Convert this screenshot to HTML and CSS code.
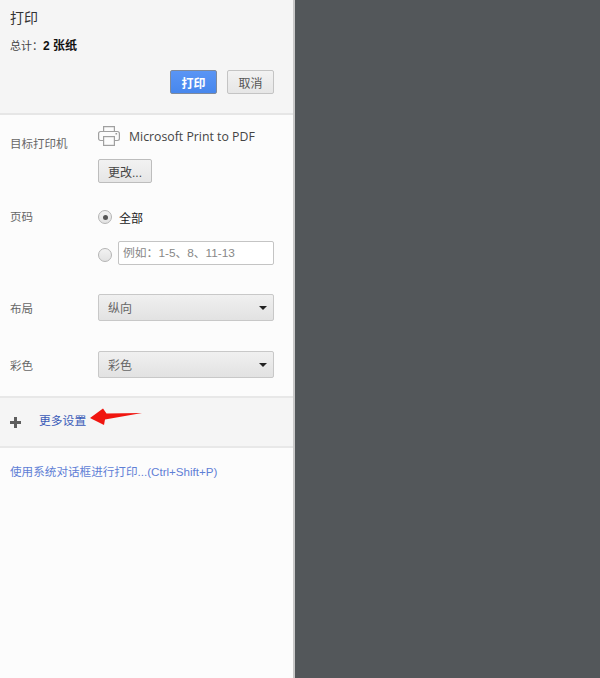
FILE: index.html
```html
<!DOCTYPE html>
<html lang="zh">
<head>
<meta charset="utf-8">
<title>打印</title>
<link rel="stylesheet" href="styles.css">
</head>
<body>
<div class="app">
  <aside class="sidebar">
    <header class="head">
      <h1 class="title">打印</h1>
      <p class="total">总计：<b>2 张纸</b></p>
      <div class="actions">
        <button class="btn primary">打印</button>
        <button class="btn cancel">取消</button>
      </div>
    </header>
    <section class="settings">
      <div class="row row-dest">
        <div class="label">目标打印机</div>
        <div class="content">
          <div class="dest">
            <svg class="printer" width="22" height="20" viewBox="0 0 22 20" fill="none" stroke="#a0a0a0" stroke-width="1.2">
              <path d="M5.6 5.500V.6h10.800v4.900"/>
              <path d="M5.500 14.500H2.500a1.900 1.900 0 0 1-1.900-1.900V7.400a1.900 1.900 0 0 1 1.900-1.900h17a1.900 1.900 0 0 1 1.900 1.900v5.200a1.900 1.900 0 0 1-1.900 1.900h-3"/>
              <rect x="5.6" y="10.6" width="10.8" height="8.8"/>
              <path d="M17.500 7.800h1.600" stroke="#808080"/>
            </svg>
            <span class="dest-name">Microsoft Print to PDF</span>
          </div>
          <button class="btn change">更改...</button>
        </div>
      </div>
      <div class="row row-pages">
        <div class="label">页码</div>
        <div class="content">
          <div class="radio-line first">
            <span class="radio checked"></span><span class="radio-text">全部</span>
          </div>
          <div class="radio-line second">
            <span class="radio low"></span><span class="text-input">例如：1-5、8、11-13</span>
          </div>
        </div>
      </div>
      <div class="row row-layout">
        <div class="label">布局</div>
        <div class="content"><div class="select"><span>纵向</span><i class="caret"></i></div></div>
      </div>
      <div class="row row-color">
        <div class="label">彩色</div>
        <div class="content"><div class="select"><span>彩色</span><i class="caret"></i></div></div>
      </div>
    </section>
    <div class="more">
      <svg class="plus" width="11" height="11" viewBox="0 0 11 11"><path d="M4 0h3v4h4v3H7v4H4V7H0V4h4z" fill="#5e5e5e"/></svg>
      <a class="more-link">更多设置</a>
      <svg class="arrow" width="53" height="18" viewBox="0 0 53 18"><path d="M0 10 13 .5 16.500 5.500l35.500-.5L15 11.500 14 17z" fill="#f0150f"/></svg>
    </div>
    <a class="system">使用系统对话框进行打印...(Ctrl+Shift+P)</a>
  </aside>
  <main class="preview"></main>
</div>
</body>
</html>
```

FILE: styles.css
```css
* { box-sizing: border-box; }
html, body { margin: 0; height: 100%; }
body { font-family: "Liberation Sans", "Noto Sans CJK SC", sans-serif; font-size: 12px; color: #444; }
.app { display: flex; height: 678px; overflow: hidden; }
.sidebar { width: 295px; flex: none; background: #fcfcfc; border-right: 2px solid #c8c8c8; }
.preview { flex: 1; background: #53575a; }

.head { height: 115px; background: #f5f5f5; border-bottom: 2px solid #e6e6e6; padding: 9px 19px 0 10px; }
.title { margin: 0; font-size: 14px; line-height: 19px; font-weight: 400; color: #333; }
.total { margin: 9px 0 0; font-size: 11px; line-height: 18px; color: #444; }
.total b { color: #111; font-size: 12px; font-weight: 700; }
.actions { display: flex; justify-content: flex-end; gap: 10px; margin-top: 15px; }

.btn { font: inherit; padding: 0; border-radius: 2px; cursor: default; }
.primary { width: 47px; height: 24px; background: linear-gradient(#5a95f5, #4787ed); border: 1px solid #7f8a9c; color: #fff; font-weight: 700; }
.cancel { width: 47px; height: 24px; background: linear-gradient(#f2f2f2, #e6e6e6); border: 1px solid #c4c4c4; color: #555; }
.change { display: block; width: 54px; height: 24px; background: linear-gradient(#f2f2f2, #e6e6e6); border: 1px solid #bdbdbd; color: #444; }

.row { display: grid; grid-template-columns: 88px 175.5px; padding-left: 10px; }
.label { color: #666; font-size: 11.5px; line-height: 18px; }
.row-dest { padding-top: 11px; height: 80px; }
.row-dest .label { padding-top: 9px; }
.dest { display: flex; height: 22px; margin-bottom: 11px; }
.printer { margin-right: 9px; flex: none; }
.dest-name { font-family: "Open Sans", "Liberation Sans", sans-serif; font-size: 12.3px; line-height: 22px; color: #444; white-space: nowrap; }

.row-pages { height: 87px; padding-top: 13px; }
.radio-line { display: flex; align-items: center; }
.first { height: 18px; }
.second { height: 24px; margin-top: 15px; }
.radio { width: 14px; height: 14px; flex: none; border-radius: 50%; border: 1px solid #b4b4b4; background: linear-gradient(#f2f2f2, #e2e2e2); position: relative; }
.low { margin-top: 3px; }
.checked::after { content: ""; position: absolute; left: 3.500px; top: 3.500px; width: 5px; height: 5px; border-radius: 50%; background: #555; }
.radio-text { margin-left: 7px; color: #222; }
.text-input { margin-left: 6px; width: 155.5px; height: 24px; line-height: 22px; padding-left: 4px; background: #fff; border: 1px solid #c4c4c4; border-radius: 2px; color: #888; font-size: 11.8px; white-space: nowrap; }

.row-layout, .row-color { align-items: center; }
.row-layout .label, .row-color .label { margin-top: 2px; }
.row-layout { height: 27px; margin-top: 12px; }
.row-color { height: 27px; margin-top: 30px; }
.select { display: flex; align-items: center; justify-content: space-between; height: 27px; padding: 0 5.500px 0 9px; background: linear-gradient(#f0f0f0, #e2e2e2); border: 1px solid #c8c8c8; border-radius: 2px; color: #666; }
.caret { width: 0; height: 0; border-left: 4.500px solid transparent; border-right: 4.500px solid transparent; border-top: 4.500px solid #222; }

.settings { height: 281px; }
.more { display: flex; align-items: center; height: 52px; background: #f5f5f5; border-top: 2px solid #e8e8e8; border-bottom: 2px solid #e8e8e8; padding-left: 10px; }
.plus { flex: none; margin-top: 1px; }
.more-link { margin-left: 18px; margin-top: -6px; color: #3a5bb8; font-size: 11.8px; }
.arrow { flex: none; margin-left: 3.500px; margin-top: -10px; }
.system { display: block; margin: 15px 0 0 10px; color: #5f7fd6; font-size: 11.6px; line-height: 18px; white-space: nowrap; }
```
